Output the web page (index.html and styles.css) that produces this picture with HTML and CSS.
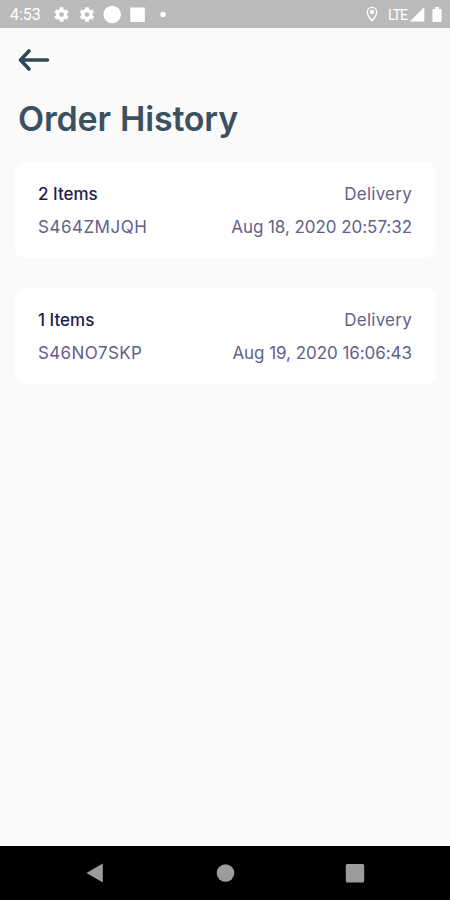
FILE: index.html
```html
<!DOCTYPE html>
<html lang="en">
<head>
<meta charset="utf-8">
<title>Order History</title>
<link rel="stylesheet" href="styles.css">
</head>
<body>
<div class="screen">
  <header class="status">
    <span class="time">4:53</span>
    <svg class="status-icons" width="112" height="28" viewBox="0 0 112 28">
      <defs>
        <g id="gear">
          <circle r="4" fill="none" stroke="#fff" stroke-width="3.3"/>
          <path d="M0-7.2V-4M0 7.2V4M-6.2-3.6L-3.5-2M6.2 3.6L3.5 2M-6.2 3.6L-3.5 2M6.2-3.6L3.5-2" stroke="#fff" stroke-width="3.7"/>
        </g>
      </defs>
      <use href="#gear" x="7.5" y="14.5"/>
      <use href="#gear" x="33" y="14.5"/>
      <circle cx="58.2" cy="14.5" r="8.8" fill="#fff"/>
      <rect x="76.3" y="7.5" width="14.5" height="14.5" fill="#fff"/>
      <circle cx="109" cy="14.5" r="2.7" fill="#fff"/>
    </svg>
    <svg class="pin" width="12" height="28" viewBox="0 0 12 28">
      <path d="M6 7.4C3.2 7.4 1.3 9.5 1.3 12C1.3 15.5 6 20.8 6 20.8S10.7 15.5 10.7 12C10.7 9.5 8.8 7.4 6 7.4Z" fill="none" stroke="#fff" stroke-width="1.4"/>
      <circle cx="6" cy="12" r="2.2" fill="#fff"/>
    </svg>
    <span class="lte">LTE</span>
    <svg class="signal" width="34" height="28" viewBox="0 0 34 28">
      <path d="M0 21.5L14.3 7V21.5Z" fill="#fff"/>
      <path d="M22.5 9H25V7H29V9H31.5V22H22.5Z" fill="#fff"/>
    </svg>
  </header>
  <main class="content">
    <svg class="back" width="32" height="24" viewBox="0 0 32 24">
      <path d="M11 3L2.5 12L11 21M3 12H29.5" fill="none" stroke="#2f4858" stroke-width="3.6" stroke-linecap="round" stroke-linejoin="round"/>
    </svg>
    <h1 class="title">Order History</h1>
    <section class="card">
      <div class="row"><span class="items">2 Items</span><span class="kind">Delivery</span></div>
      <div class="row"><span class="code code-a">S464ZMJQH</span><span class="date">Aug 18, 2020 20:57:32</span></div>
    </section>
    <section class="card">
      <div class="row"><span class="items">1 Items</span><span class="kind">Delivery</span></div>
      <div class="row"><span class="code code-b">S46NO7SKP</span><span class="date">Aug 19, 2020 16:06:43</span></div>
    </section>
  </main>
  <nav class="nav">
    <svg width="450" height="54" viewBox="0 0 450 54" fill="#9c9c9c">
      <path d="M86.5 27L102.8 17.6V36.6Z"/>
      <circle cx="225.5" cy="27" r="8.8"/>
      <rect x="345.8" y="18" width="18.4" height="18.4" rx="1.5"/>
    </svg>
  </nav>
</div>
</body>
</html>
```
FILE: styles.css
```css
* { box-sizing: border-box; }
body { margin: 0; }
.screen {
  width: 450px;
  height: 900px;
  display: flex;
  flex-direction: column;
  background: #fafafa;
  font-family: Inter, sans-serif;
  color: #625f8d;
  white-space: nowrap;
}
.status {
  height: 28px;
  flex: none;
  display: flex;
  align-items: center;
  background: #bababa;
  color: #fff;
  font-family: Roboto, sans-serif;
}
.status svg { flex: none; }
.time { width: 44px; margin-left: 10px; font-size: 16px; line-height: 28px; padding-top: 2px; }
.pin { margin-left: 200px; }
.lte { margin-left: 10px; width: 22px; font-size: 14px; line-height: 28px; letter-spacing: -1px; padding-top: 1px; }
.content { flex: 1; padding: 20px 14px 0 15px; }
.back { display: block; margin-left: 3px; }
.title {
  margin: 22px 0 18px 3px;
  height: 50px;
  line-height: 50px;
  font-size: 34px;
  font-weight: 600;
  letter-spacing: -0.2px;
  word-spacing: 1px;
  color: #3b515f;
}
.card {
  height: 96px;
  margin-bottom: 30px;
  padding: 16px 24px 0 23px;
  border-radius: 10px;
  background: #fff;
}
.row { display: flex; justify-content: space-between; height: 33px; line-height: 33px; font-size: 17px; }
.items { color: #211c52; font-weight: 500; }
.kind { letter-spacing: 0.25px; }
.code-a { letter-spacing: 0.5px; }
.code-b { letter-spacing: 0.35px; }
.date { letter-spacing: -0.05px; }
.nav { flex: none; height: 54px; background: #000; }
.nav svg { display: block; }
```
